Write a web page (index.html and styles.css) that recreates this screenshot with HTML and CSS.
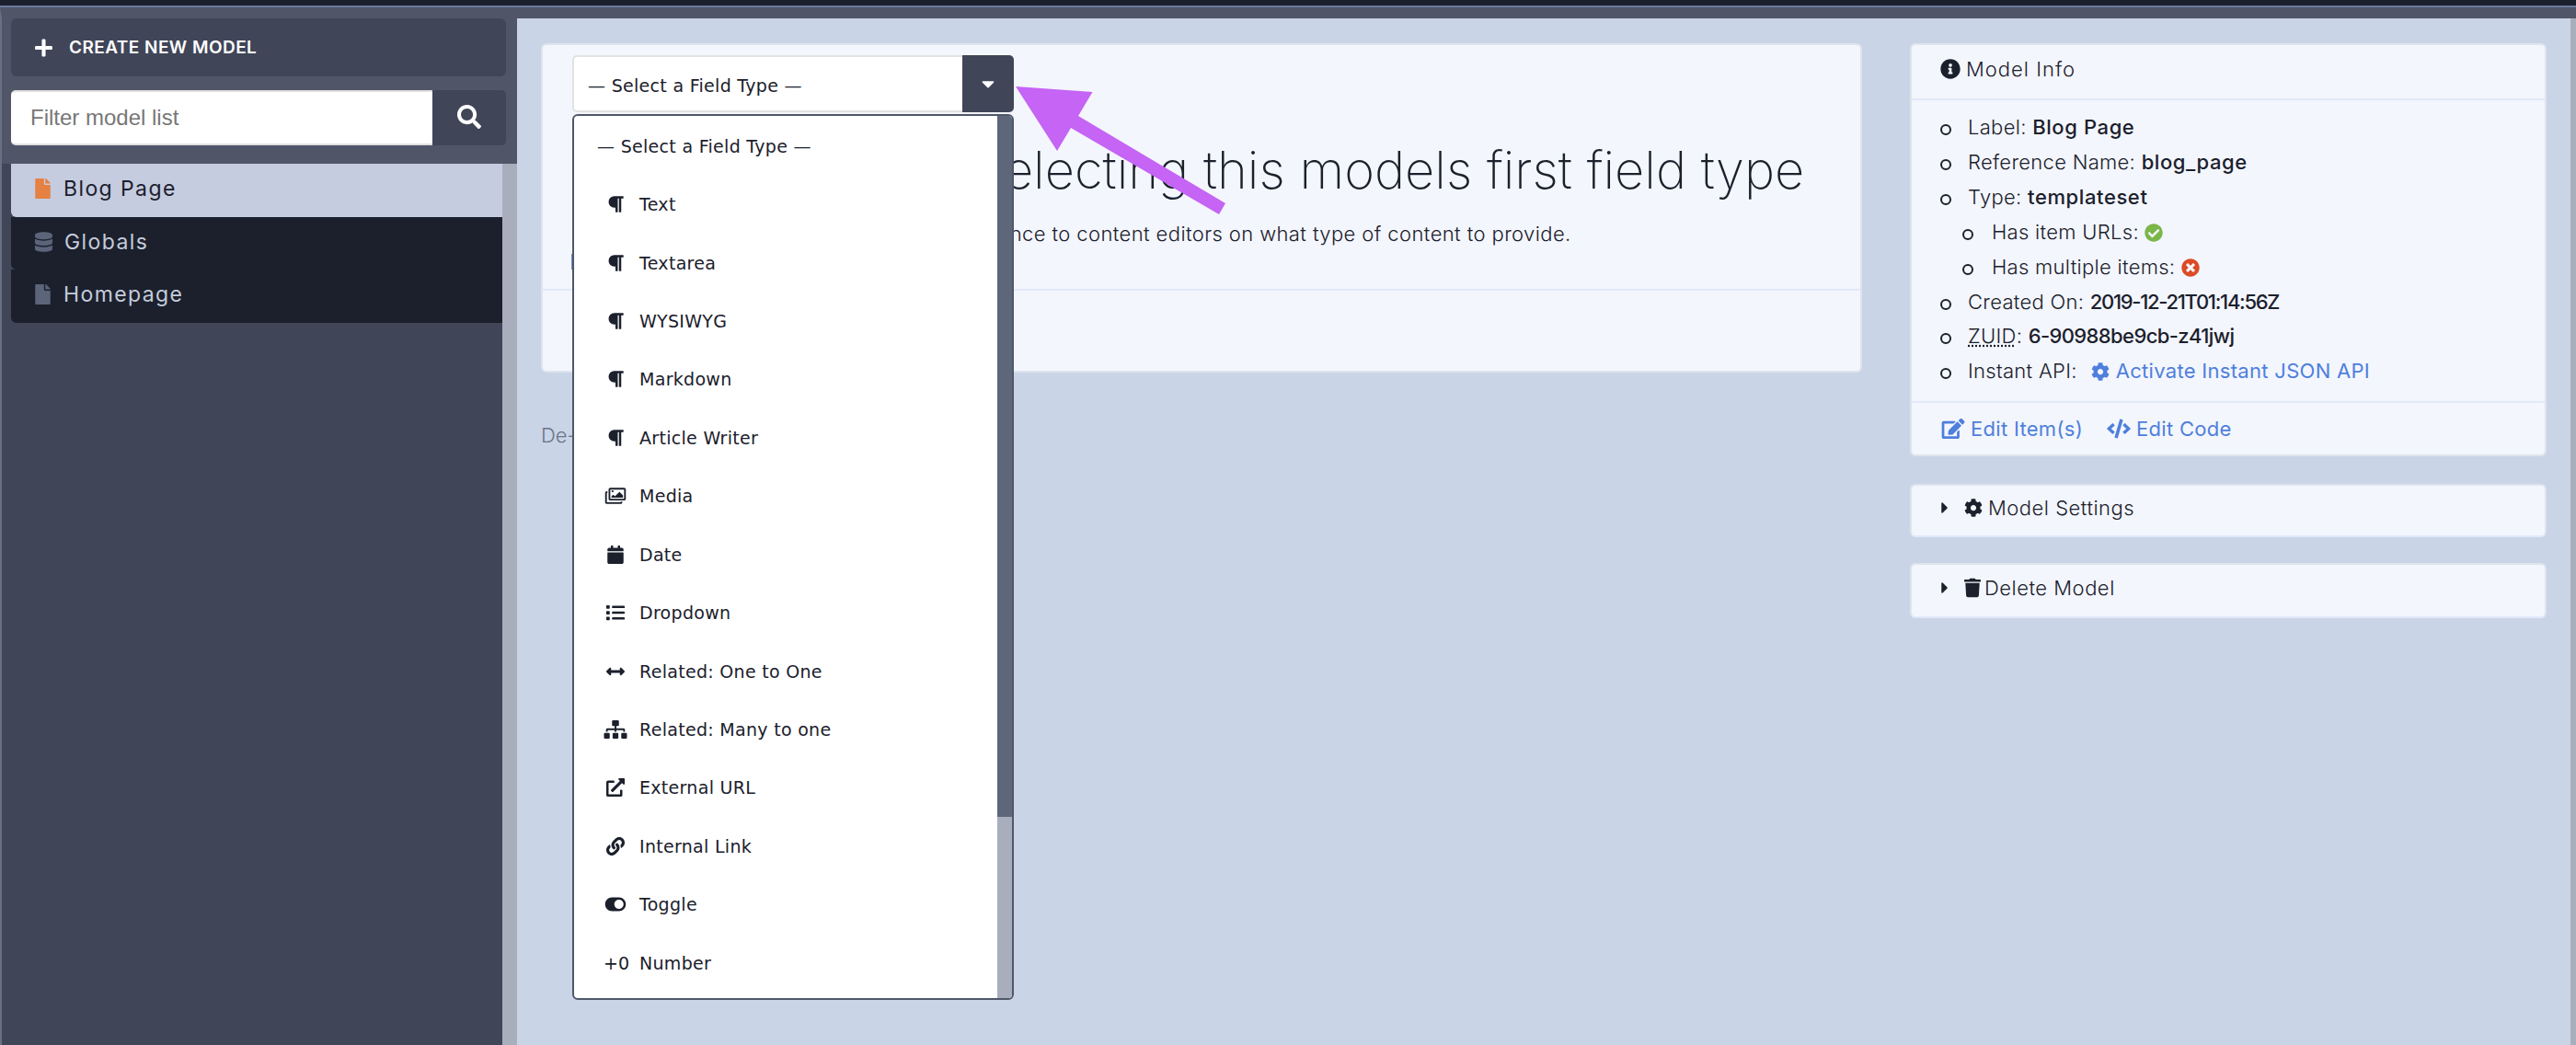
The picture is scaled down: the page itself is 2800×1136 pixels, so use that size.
FILE: index.html
```html
<!DOCTYPE html>
<html lang="en">
<head>
  <meta charset="UTF-8">
  <meta name="viewport" content="width=device-width, initial-scale=1.0">
  <title>Model Fields</title>
  <link rel="stylesheet" href="styles.css">
</head>
<body>

<svg class="sprite" xmlns="http://www.w3.org/2000/svg">
  <symbol id="i-plus" viewBox="0 0 448 512"><path d="M416 208H272V64c0-17.67-14.33-32-32-32h-32c-17.67 0-32 14.33-32 32v144H32c-17.67 0-32 14.33-32 32v32c0 17.67 14.33 32 32 32h144v144c0 17.67 14.33 32 32 32h32c17.67 0 32-14.33 32-32V304h144c17.67 0 32-14.33 32-32v-32c0-17.67-14.33-32-32-32z"/></symbol>
  <symbol id="i-search" viewBox="0 0 512 512"><path d="M505 442.7L405.3 343c-4.5-4.5-10.6-7-17-7H372c27.6-35.3 44-79.7 44-128C416 93.1 322.9 0 208 0S0 93.1 0 208s93.1 208 208 208c48.3 0 92.7-16.4 128-44v16.3c0 6.4 2.5 12.5 7 17l99.7 99.7c9.4 9.4 24.6 9.4 33.9 0l28.3-28.3c9.4-9.4 9.4-24.6.1-34zM208 336c-70.7 0-128-57.2-128-128 0-70.7 57.2-128 128-128 70.7 0 128 57.2 128 128 0 70.7-57.2 128-128 128z"/></symbol>
  <symbol id="i-file" viewBox="0 0 384 512"><path d="M224 136V0H24C10.7 0 0 10.7 0 24v464c0 13.3 10.7 24 24 24h336c13.3 0 24-10.7 24-24V160H248c-13.2 0-24-10.8-24-24zm160-14.1v6.1H256V0h6.1c6.4 0 12.5 2.5 17 7l97.9 98c4.5 4.5 7 10.6 7 16.9z"/></symbol>
  <symbol id="i-database" viewBox="0 0 448 512"><path d="M448 73.143v45.714C448 159.143 347.667 192 224 192S0 159.143 0 118.857V73.143C0 32.857 100.333 0 224 0s224 32.857 224 73.143zM448 176v102.857C448 319.143 347.667 352 224 352S0 319.143 0 278.857V176c48.125 33.143 136.208 48.572 224 48.572S399.874 209.143 448 176zm0 160v102.857C448 479.143 347.667 512 224 512S0 479.143 0 438.857V336c48.125 33.143 136.208 48.572 224 48.572S399.874 369.143 448 336z"/></symbol>
  <symbol id="i-caret-down" viewBox="0 0 320 512"><path d="M31.3 192h257.3c17.8 0 26.7 21.5 14.1 34.1L174.1 354.8c-7.8 7.8-20.5 7.8-28.3 0L17.2 226.1C4.6 213.5 13.5 192 31.3 192z"/></symbol>
  <symbol id="i-caret-right" viewBox="0 0 192 512"><path d="M0 384.662V127.338c0-17.818 21.543-26.741 34.142-14.142l128.662 128.662c7.81 7.81 7.81 20.474 0 28.284L34.142 398.804C21.543 411.404 0 402.48 0 384.662z"/></symbol>
  <symbol id="i-paragraph" viewBox="0 0 448 512"><path d="M448 48v32a16 16 0 0 1-16 16h-48v368a16 16 0 0 1-16 16h-32a16 16 0 0 1-16-16V96h-32v368a16 16 0 0 1-16 16h-32a16 16 0 0 1-16-16V352h-32a160 160 0 0 1 0-320h240a16 16 0 0 1 16 16z"/></symbol>
  <symbol id="i-images" viewBox="0 0 576 512"><path d="M144 32h384c26.5 0 48 21.5 48 48v256c0 26.5-21.5 48-48 48H144c-26.5 0-48-21.5-48-48V80c0-26.5 21.5-48 48-48zm6 48a6 6 0 0 0-6 6v244a6 6 0 0 0 6 6h372a6 6 0 0 0 6-6V86a6 6 0 0 0-6-6H150zm58 20c15.5 0 28 12.5 28 28s-12.5 28-28 28-28-12.5-28-28 12.5-28 28-28zm-32 204v-32l40-40c4.7-4.7 12.3-4.7 17 0l39 39 119-119c4.7-4.7 12.3-4.7 17 0l88 88v64H176zM48 128h16v48H54a6 6 0 0 0-6 6v244a6 6 0 0 0 6 6h372a6 6 0 0 0 6-6v-10h48v16c0 26.5-21.5 48-48 48H48c-26.5 0-48-21.5-48-48V176c0-26.5 21.5-48 48-48z"/></symbol>
  <symbol id="i-calendar" viewBox="0 0 448 512"><path d="M12 192h424c6.6 0 12 5.4 12 12v260c0 26.5-21.5 48-48 48H48c-26.5 0-48-21.5-48-48V204c0-6.6 5.4-12 12-12zm436-44v-36c0-26.5-21.5-48-48-48h-48V12c0-6.6-5.4-12-12-12h-40c-6.6 0-12 5.4-12 12v52H160V12c0-6.6-5.4-12-12-12h-40c-6.6 0-12 5.4-12 12v52H48C21.5 64 0 85.5 0 112v36c0 6.6 5.4 12 12 12h424c6.6 0 12-5.4 12-12z"/></symbol>
  <symbol id="i-list" viewBox="0 0 512 512"><path d="M80 368H16a16 16 0 0 0-16 16v64a16 16 0 0 0 16 16h64a16 16 0 0 0 16-16v-64a16 16 0 0 0-16-16zm0-320H16A16 16 0 0 0 0 64v64a16 16 0 0 0 16 16h64a16 16 0 0 0 16-16V64a16 16 0 0 0-16-16zm0 160H16a16 16 0 0 0-16 16v64a16 16 0 0 0 16 16h64a16 16 0 0 0 16-16v-64a16 16 0 0 0-16-16zm416 176H176a16 16 0 0 0-16 16v32a16 16 0 0 0 16 16h320a16 16 0 0 0 16-16v-32a16 16 0 0 0-16-16zm0-320H176a16 16 0 0 0-16 16v32a16 16 0 0 0 16 16h320a16 16 0 0 0 16-16V80a16 16 0 0 0-16-16zm0 160H176a16 16 0 0 0-16 16v32a16 16 0 0 0 16 16h320a16 16 0 0 0 16-16v-32a16 16 0 0 0-16-16z"/></symbol>
  <symbol id="i-arrows-h" viewBox="0 0 512 512"><path d="M377.941 169.941V216H134.059v-46.059c0-21.382-25.851-32.09-40.971-16.971L7.029 239.029c-9.373 9.373-9.373 24.568 0 33.941l86.059 86.059c15.119 15.119 40.971 4.411 40.971-16.971V296h243.882v46.059c0 21.382 25.851 32.09 40.971 16.971l86.059-86.059c9.373-9.373 9.373-24.568 0-33.941l-86.059-86.059c-15.12-15.12-40.971-4.412-40.971 16.97z"/></symbol>
  <symbol id="i-sitemap" viewBox="0 0 640 512"><path d="M128 352H32c-17.67 0-32 14.33-32 32v96c0 17.67 14.33 32 32 32h96c17.67 0 32-14.33 32-32v-96c0-17.67-14.33-32-32-32zm-24-80h192v48h48v-48h192v48h48v-57.59c0-21.17-17.23-38.41-38.41-38.41H344v-64h40c17.67 0 32-14.33 32-32V32c0-17.67-14.33-32-32-32H256c-17.67 0-32 14.33-32 32v96c0 17.67 14.33 32 32 32h40v64H94.41C73.23 224 56 241.23 56 262.41V320h48v-48zm264 80h-96c-17.67 0-32 14.33-32 32v96c0 17.67 14.33 32 32 32h96c17.67 0 32-14.33 32-32v-96c0-17.67-14.33-32-32-32zm240 0h-96c-17.67 0-32 14.33-32 32v96c0 17.67 14.33 32 32 32h96c17.67 0 32-14.33 32-32v-96c0-17.67-14.33-32-32-32z"/></symbol>
  <symbol id="i-external" viewBox="0 0 512 512"><path d="M432 320h-32a16 16 0 0 0-16 16v112H64V128h144a16 16 0 0 0 16-16V80a16 16 0 0 0-16-16H48a48 48 0 0 0-48 48v352a48 48 0 0 0 48 48h352a48 48 0 0 0 48-48V336a16 16 0 0 0-16-16zM488 0H360c-21.37 0-32.05 25.91-17 41l35.73 35.73L135 320.37a24 24 0 0 0 0 34L157.67 377a24 24 0 0 0 34 0l243.61-243.68L471 169c15 15 41 4.5 41-17V24a24 24 0 0 0-24-24z"/></symbol>
  <symbol id="i-link" viewBox="0 0 512 512"><path d="M326.612 185.391c59.747 59.809 58.927 155.698.36 214.59-.11.12-.24.25-.36.37l-67.2 67.2c-59.27 59.27-155.699 59.262-214.96 0-59.27-59.26-59.27-155.7 0-214.96l37.106-37.106c9.84-9.84 26.786-3.3 27.294 10.606.648 17.722 3.826 35.527 9.69 52.721 1.986 5.822.567 12.262-3.783 16.612l-13.087 13.087c-28.026 28.026-28.905 73.66-1.155 101.96 28.024 28.579 74.086 28.749 102.325.51l67.2-67.19c28.191-28.191 28.073-73.757 0-101.83-3.701-3.694-7.429-6.564-10.341-8.569a16.037 16.037 0 0 1-6.947-12.606c-.396-10.567 3.348-21.456 11.698-29.806l21.054-21.055c5.521-5.521 14.182-6.199 20.584-1.731a152.482 152.482 0 0 1 20.522 17.197zM467.547 44.449c-59.261-59.262-155.69-59.27-214.96 0l-67.2 67.2c-.12.12-.25.25-.36.37-58.566 58.892-59.387 154.781.36 214.59a152.454 152.454 0 0 0 20.521 17.196c6.402 4.468 15.064 3.789 20.584-1.731l21.054-21.055c8.35-8.35 12.094-19.239 11.698-29.806a16.037 16.037 0 0 0-6.947-12.606c-2.912-2.005-6.64-4.875-10.341-8.569-28.073-28.073-28.191-73.639 0-101.83l67.2-67.19c28.239-28.239 74.3-28.069 102.325.51 27.75 28.3 26.872 73.934-1.155 101.96l-13.087 13.087c-4.35 4.35-5.769 10.79-3.783 16.612 5.864 17.194 9.042 34.999 9.69 52.721.509 13.906 17.454 20.446 27.294 10.606l37.106-37.106c59.271-59.259 59.271-155.699.001-214.959z"/></symbol>
  <symbol id="i-toggle" viewBox="0 0 576 512"><path d="M384 64H192C86 64 0 150 0 256s86 192 192 192h192c106 0 192-86 192-192S490 64 384 64zm0 320c-70.8 0-128-57.3-128-128 0-70.8 57.3-128 128-128 70.8 0 128 57.3 128 128 0 70.8-57.3 128-128 128z"/></symbol>
  <symbol id="i-info" viewBox="0 0 512 512"><path d="M256 8C119.043 8 8 119.083 8 256c0 136.997 111.043 248 248 248s248-111.003 248-248C504 119.083 392.957 8 256 8zm0 110c23.196 0 42 18.804 42 42s-18.804 42-42 42-42-18.804-42-42 18.804-42 42-42zm56 254c0 6.627-5.373 12-12 12h-88c-6.627 0-12-5.373-12-12v-24c0-6.627 5.373-12 12-12h12v-64h-12c-6.627 0-12-5.373-12-12v-24c0-6.627 5.373-12 12-12h64c6.627 0 12 5.373 12 12v100h12c6.627 0 12 5.373 12 12v24z"/></symbol>
  <symbol id="i-check" viewBox="0 0 512 512"><path d="M504 256c0 136.967-111.033 248-248 248S8 392.967 8 256 119.033 8 256 8s248 111.033 248 248zM227.314 387.314l184-184c6.248-6.248 6.248-16.379 0-22.627l-22.627-22.627c-6.248-6.249-16.379-6.249-22.628 0L216 308.118l-70.059-70.059c-6.248-6.248-16.379-6.248-22.628 0l-22.627 22.627c-6.248 6.248-6.248 16.379 0 22.627l104 104c6.249 6.249 16.379 6.249 22.628.001z"/></symbol>
  <symbol id="i-times" viewBox="0 0 512 512"><path d="M256 8C119 8 8 119 8 256s111 248 248 248 248-111 248-248S393 8 256 8zm121.6 313.1c4.7 4.7 4.7 12.3 0 17L338 377.6c-4.7 4.7-12.3 4.7-17 0L256 312l-65.1 65.6c-4.7 4.7-12.3 4.7-17 0L134.4 338c-4.7-4.7-4.7-12.3 0-17l65.6-65-65.6-65.1c-4.7-4.7-4.7-12.3 0-17l39.6-39.6c4.7-4.7 12.3-4.7 17 0l65 65.7 65.1-65.6c4.7-4.7 12.3-4.7 17 0l39.6 39.6c4.7 4.7 4.7 12.3 0 17L312 256l65.6 65.1z"/></symbol>
  <symbol id="i-cog" viewBox="0 0 512 512"><path d="M487.4 315.7l-42.6-24.6c4.3-23.2 4.3-47 0-70.2l42.6-24.6c4.9-2.8 7.1-8.6 5.5-14-11.1-35.6-30-67.8-54.7-94.6-3.8-4.1-10-5.1-14.8-2.3L380.8 110c-17.9-15.4-38.5-27.3-60.8-35.1V25.8c0-5.6-3.9-10.5-9.4-11.7-36.7-8.2-74.3-7.8-109.2 0-5.5 1.2-9.4 6.1-9.4 11.7V75c-22.2 7.9-42.8 19.8-60.8 35.1L88.7 85.5c-4.9-2.8-11-1.9-14.8 2.3-24.7 26.7-43.6 58.9-54.7 94.6-1.7 5.4.6 11.2 5.5 14L67.3 221c-4.3 23.2-4.3 47 0 70.2l-42.6 24.6c-4.9 2.8-7.1 8.6-5.5 14 11.1 35.6 30 67.8 54.7 94.6 3.8 4.1 10 5.1 14.8 2.3l42.6-24.6c17.9 15.4 38.5 27.3 60.8 35.1v49.2c0 5.6 3.9 10.5 9.4 11.7 36.7 8.2 74.3 7.8 109.2 0 5.5-1.2 9.4-6.1 9.4-11.7v-49.2c22.2-7.9 42.8-19.8 60.8-35.1l42.6 24.6c4.9 2.8 11 1.9 14.8-2.3 24.7-26.7 43.6-58.9 54.7-94.6 1.5-5.5-.7-11.3-5.6-14.1zM256 336c-44.1 0-80-35.9-80-80s35.9-80 80-80 80 35.9 80 80-35.9 80-80 80z"/></symbol>
  <symbol id="i-edit" viewBox="0 0 576 512"><path d="M402.6 83.2l90.2 90.2c3.8 3.8 3.8 10 0 13.8L274.4 405.6l-92.8 10.3c-12.4 1.4-22.9-9.1-21.5-21.5l10.3-92.8L388.8 83.2c3.8-3.8 10-3.8 13.8 0zm162-22.9l-48.8-48.8c-15.2-15.2-39.9-15.2-55.2 0l-35.4 35.4c-3.8 3.8-3.8 10 0 13.8l90.2 90.2c3.8 3.8 10 3.8 13.8 0l35.4-35.4c15.2-15.3 15.2-40 0-55.2zM384 346.2V448H64V128h229.8c3.2 0 6.2-1.3 8.5-3.5l40-40c7.6-7.6 2.2-20.5-8.5-20.5H48C21.5 64 0 85.5 0 112v352c0 26.5 21.5 48 48 48h352c26.5 0 48-21.5 48-48V306.2c0-10.7-12.9-16-20.5-8.5l-40 40c-2.2 2.3-3.5 5.3-3.5 8.5z"/></symbol>
  <symbol id="i-code" viewBox="0 0 640 512"><path d="M278.9 511.5l-61-17.7c-6.4-1.8-10-8.5-8.2-14.9L346.2 8.7c1.8-6.4 8.5-10 14.9-8.2l61 17.7c6.4 1.8 10 8.5 8.2 14.9L293.8 503.3c-1.9 6.4-8.5 10.1-14.9 8.2zm-114-112.2l43.5-46.4c4.6-4.9 4.3-12.7-.8-17.2L117 256l90.6-79.7c5.1-4.5 5.5-12.3.8-17.2l-43.5-46.4c-4.5-4.8-12.1-5.1-17-.5L3.8 247.2c-5.1 4.7-5.1 12.8 0 17.5l144.1 135.1c4.9 4.6 12.5 4.4 17-.5zm327.2.6l144.1-135.1c5.1-4.7 5.1-12.8 0-17.5L492.1 112.1c-4.8-4.5-12.4-4.3-17 .5L431.6 159c-4.6 4.9-4.3 12.7.8 17.2L523 256l-90.6 79.7c-5.1 4.5-5.5 12.3-.8 17.2l43.5 46.4c4.5 4.9 12.1 5.1 17 .6z"/></symbol>
  <symbol id="i-trash" viewBox="0 0 448 512"><path d="M432 32H312l-9.4-18.7A24 24 0 0 0 281.1 0H166.8a23.72 23.72 0 0 0-21.4 13.3L136 32H16A16 16 0 0 0 0 48v32a16 16 0 0 0 16 16h416a16 16 0 0 0 16-16V48a16 16 0 0 0-16-16zM53.2 467a48 48 0 0 0 47.9 45h245.8a48 48 0 0 0 47.9-45L416 128H32z"/></symbol>
</svg>

<div class="topbar"></div>

<div class="app">
  <aside class="sidebar">
    <div class="sidebar-head">
      <button class="create-btn"><svg class="icon"><use href="#i-plus"/></svg>CREATE NEW MODEL</button>
      <div class="filter">
        <input class="filter-input" type="text" placeholder="Filter model list">
        <button class="filter-btn"><svg class="icon"><use href="#i-search"/></svg></button>
      </div>
    </div>
    <div class="model-wrap">
      <ul class="models">
        <li class="model active"><svg class="icon"><use href="#i-file"/></svg>Blog Page</li>
        <li class="model"><svg class="icon db"><use href="#i-database"/></svg>Globals</li>
        <li class="model"><svg class="icon"><use href="#i-file"/></svg>Homepage</li>
      </ul>
      <div class="model-track"></div>
    </div>
  </aside>

  <main class="main">
    <section class="editor">
      <div class="card field-card">
        <div class="field-top">
          <h1>Start by selecting this models first field type</h1>
          <p>Provide guidance to content editors on what type of content to provide.</p>
        </div>
        <div class="field-foot"></div>
        <div class="peek-btn"></div>

        <div class="select">
          <div class="select-value">— Select a Field Type —</div>
          <div class="select-caret"><svg class="icon"><use href="#i-caret-down"/></svg></div>
        </div>
        <div class="select-menu">
          <ul class="options">
            <li class="option plain">— Select a Field Type —</li>
            <li class="option"><svg class="icon"><use href="#i-paragraph"/></svg><span>Text</span></li>
            <li class="option"><svg class="icon"><use href="#i-paragraph"/></svg><span>Textarea</span></li>
            <li class="option"><svg class="icon"><use href="#i-paragraph"/></svg><span>WYSIWYG</span></li>
            <li class="option"><svg class="icon"><use href="#i-paragraph"/></svg><span>Markdown</span></li>
            <li class="option"><svg class="icon"><use href="#i-paragraph"/></svg><span>Article Writer</span></li>
            <li class="option"><svg class="icon"><use href="#i-images"/></svg><span>Media</span></li>
            <li class="option"><svg class="icon"><use href="#i-calendar"/></svg><span>Date</span></li>
            <li class="option"><svg class="icon"><use href="#i-list"/></svg><span>Dropdown</span></li>
            <li class="option"><svg class="icon"><use href="#i-arrows-h"/></svg><span>Related: One to One</span></li>
            <li class="option"><svg class="icon"><use href="#i-sitemap"/></svg><span>Related: Many to one</span></li>
            <li class="option"><svg class="icon"><use href="#i-external"/></svg><span>External URL</span></li>
            <li class="option"><svg class="icon"><use href="#i-link"/></svg><span>Internal Link</span></li>
            <li class="option"><svg class="icon"><use href="#i-toggle"/></svg><span>Toggle</span></li>
            <li class="option"><b class="num-icon">+0</b><span>Number</span></li>
          </ul>
          <div class="menu-scroll"><div class="menu-thumb"></div></div>
        </div>

        <svg class="callout" viewBox="0 0 240 150" xmlns="http://www.w3.org/2000/svg">
          <polygon points="4,4 87.5,10 72,36 232,131 225,143 64,49 49,74"/>
        </svg>
      </div>
      <p class="deactivated">De-activated fields</p>
    </section>

    <aside class="info">
      <div class="card">
        <div class="info-head"><svg class="icon"><use href="#i-info"/></svg>Model Info</div>
        <ul class="facts">
          <li>Label: <strong>Blog Page</strong></li>
          <li>Reference Name: <strong>blog_page</strong></li>
          <li>Type: <strong>templateset</strong>
            <ul>
              <li>Has item URLs: <svg class="icon good"><use href="#i-check"/></svg></li>
              <li>Has multiple items: <svg class="icon bad"><use href="#i-times"/></svg></li>
            </ul>
          </li>
          <li>Created On: <strong class="date">2019-12-21T01:14:56Z</strong></li>
          <li><abbr>ZUID</abbr>: <strong class="zuid">6-90988be9cb-z41jwj</strong></li>
          <li>Instant API: <a class="api-link" href="#"><svg class="icon"><use href="#i-cog"/></svg> Activate Instant JSON API</a></li>
        </ul>
        <div class="info-foot">
          <a href="#"><svg class="icon"><use href="#i-edit"/></svg>Edit Item(s)</a>
          <a href="#"><svg class="icon"><use href="#i-code"/></svg>Edit Code</a>
        </div>
      </div>
      <div class="card fold">
        <svg class="icon caret"><use href="#i-caret-right"/></svg><svg class="icon"><use href="#i-cog"/></svg>Model Settings
      </div>
      <div class="card fold">
        <svg class="icon caret"><use href="#i-caret-right"/></svg><svg class="icon trash"><use href="#i-trash"/></svg>Delete Model
      </div>
    </aside>
    <div class="page-track"></div>
  </main>
</div>

</body>
</html>
```

FILE: styles.css
```css
* {
  box-sizing: border-box;
}

html,
body {
  height: 100%;
}

body {
  margin: 0;
  display: flex;
  flex-direction: column;
  overflow: hidden;
  background-color: #c9d4e7;
  color: #1b202c;
  font-family: Inter, "Open Sans", sans-serif;
}

.sprite {
  display: none;
}

.icon {
  display: inline-block;
  fill: currentColor;
  flex: none;
}

ul {
  list-style: none;
  margin: 0;
  padding: 0;
}

a {
  color: #4f7fdc;
  text-decoration: none;
}

.topbar {
  height: 8px;
  flex: none;
  background-color: #1b202c;
  border-bottom: 2px solid #697a9b;
}

.app {
  flex: 1;
  display: flex;
  min-height: 0;
  border-top: 12px solid #505668;
  border-left: 2px solid #6a7083;
}

/* sidebar */
.sidebar {
  width: 560px;
  flex: none;
  display: flex;
  flex-direction: column;
  background-color: #404558;
}

.sidebar-head {
  height: 158px;
  flex: none;
  padding: 0 12px 0 10px;
  background-color: #505668;
}

.create-btn {
  width: 100%;
  height: 63px;
  padding: 0 26px;
  display: flex;
  align-items: center;
  gap: 18px;
  border: none;
  border-radius: 6px;
  background-color: #404558;
  color: #fff;
  font-family: Inter, sans-serif;
  font-size: 19px;
  font-weight: 600;
  letter-spacing: 0.45px;
}

.create-btn .icon {
  width: 19px;
  height: 22px;
}

.filter {
  display: flex;
  height: 60px;
  margin-top: 15px;
}

.filter-input {
  width: 458px;
  height: 100%;
  padding: 0 21px;
  border: none;
  border-top: 2px solid #e0e0e0;
  border-bottom: 2px solid #e0e0e0;
  border-radius: 5px 0 0 5px;
  background-color: #fff;
  font-family: "Liberation Sans", Arial, sans-serif;
  font-size: 24px;
}

.filter-input::placeholder {
  color: #777;
}

.filter-btn {
  width: 80px;
  border: none;
  border-radius: 0 5px 5px 0;
  background-color: #404558;
  color: #fff;
  padding: 0;
}

.filter-btn .icon {
  width: 26px;
  height: 26px;
}

.model-wrap {
  flex: 1;
  display: flex;
  padding-left: 10px;
}

.models {
  width: 534px;
}

.model {
  height: 57.5px;
  display: flex;
  align-items: center;
  padding: 0 0 3px 26px;
  gap: 14px;
  background-color: #1b202c;
  border-radius: 0 0 0 6px;
  color: #c5cbdd;
  font-family: Inter, sans-serif;
  font-size: 23px;
  font-weight: 400;
  letter-spacing: 1.4px;
}

.model .icon {
  width: 17px;
  height: 22px;
  color: #5b6479;
}

.model .db {
  width: 19px;
  margin-right: -1px;
}

.model.active {
  background-color: #c6cce0;
  color: #1b202c;
}

.model.active .icon {
  color: #e58142;
}

.model-track {
  width: 16px;
  background-color: #a9aebd;
}

/* main area */
.main {
  flex: 1;
  position: relative;
  display: flex;
  align-items: flex-start;
  padding: 27px 32px 0 26px;
  background-color: #c9d4e7;
  min-width: 0;
}

.page-track {
  position: absolute;
  top: 0;
  right: 0;
  bottom: 0;
  width: 6px;
  background-color: #a9aebd;
}

.card {
  background-color: #f3f6fc;
  border: 2px solid #dfe4ec;
  border-radius: 6px;
}

.editor {
  width: 1436px;
  flex: none;
}

.field-card {
  position: relative;
  height: 358px;
}

.field-top {
  height: 267px;
  padding-top: 102px;
  text-align: center;
  border-bottom: 2px solid #e2e9fb;
}

.field-top h1 {
  margin: 0;
  padding-left: 202px;
  font-size: 56px;
  font-weight: 200;
  line-height: 68px;
}

.field-top p {
  margin: 22px 0 0;
  padding-left: 48px;
  font-size: 22px;
  font-weight: 300;
  letter-spacing: 0.4px;
}

/* left edge of a button that the open menu covers */
.peek-btn {
  position: absolute;
  left: 31px;
  top: 227px;
  width: 3px;
  height: 17px;
  background-color: #6f8cc5;
}

/* the open dropdown lies over the card */
.select {
  position: absolute;
  left: 32px;
  top: 11px;
  width: 480px;
  height: 62px;
  display: flex;
  font-family: "DejaVu Sans", sans-serif;
}

.select-value {
  flex: 1;
  display: flex;
  align-items: center;
  padding: 3px 0 0 15px;
  background-color: #fff;
  border: 2px solid #e2e2e2;
  border-right: none;
  border-radius: 5px 0 0 5px;
  font-size: 19px;
  letter-spacing: 0.3px;
}

.select-caret {
  width: 56px;
  display: flex;
  align-items: center;
  justify-content: center;
  background-color: #404558;
  color: #fff;
  border-radius: 0 5px 5px 0;
}

.select-caret .icon {
  width: 14px;
  height: 22px;
}

.select-menu {
  position: absolute;
  left: 32px;
  top: 75px;
  width: 480px;
  height: 963px;
  display: flex;
  background-color: #fff;
  border: 2px solid #4f5769;
  border-radius: 6px;
  overflow: hidden;
  font-family: "DejaVu Sans", sans-serif;
}

.options {
  flex: 1;
  padding-top: 1px;
}

.option {
  height: 63.43px;
  display: flex;
  align-items: center;
  font-size: 19px;
  letter-spacing: 0.3px;
}

.option.plain {
  padding-left: 25px;
}

.option .icon {
  width: 26px;
  height: 20px;
  margin: 0 13px 0 32px;
}

.option span {
  white-space: nowrap;
}

.num-icon {
  width: 26px;
  margin: 0 13px 0 32px;
  font-weight: 400;
  letter-spacing: 0;
  font-size: 19px;
  white-space: nowrap;
}

.menu-scroll {
  width: 16px;
  background-color: #a9aebd;
}

.menu-thumb {
  height: 762px;
  background-color: #5e667a;
}

.callout {
  position: absolute;
  left: 510px;
  top: 41px;
  width: 240px;
  height: 150px;
  fill: #c564f5;
}

.deactivated {
  margin: 55px 0 0;
  font-size: 22px;
  font-weight: 300;
  color: #6b7488;
}

/* model info */
.info {
  width: 692px;
  flex: none;
  margin-left: 52px;
  display: flex;
  flex-direction: column;
  font-size: 22px;
  font-weight: 300;
  letter-spacing: 0.3px;
}

.info-head {
  height: 60px;
  display: flex;
  align-items: center;
  gap: 6px;
  padding: 0 0 7px 31px;
  border-bottom: 2px solid #e2e9fb;
  letter-spacing: 1px;
}

.info-head .icon {
  width: 22px;
  height: 22px;
}

.facts {
  padding: 11px 0 0 31px;
  height: 329px;
  border-bottom: 2px solid #e2e9fb;
}

.facts li {
  position: relative;
  padding-left: 30px;
  line-height: 37.9px;
}

.facts li::before {
  content: "";
  position: absolute;
  left: 0;
  top: 15px;
  width: 8px;
  height: 8px;
  border: 2px solid #1b202c;
  border-radius: 50%;
}

.facts ul {
  margin-left: -6px;
}

.facts ul li {
  padding-left: 32px;
}

.facts strong {
  font-weight: 500;
  letter-spacing: 0.6px;
}

.facts .date {
  letter-spacing: -1.3px;
}

.facts .zuid {
  letter-spacing: -0.6px;
}

.facts .icon {
  width: 20px;
  height: 20px;
  vertical-align: -3px;
}

.good {
  color: #7ab648;
}

.bad {
  color: #dc4b25;
}

abbr {
  text-decoration: underline dotted;
}

.api-link {
  margin-left: 9px;
  font-weight: 400;
}

.info-foot {
  height: 56px;
  display: flex;
  align-items: center;
  gap: 26px;
  padding-left: 32px;
  font-weight: 400;
}

.info-foot a {
  display: flex;
  align-items: center;
  gap: 6px;
}

.info-foot .icon {
  width: 26px;
  height: 22px;
}

.fold {
  display: flex;
  align-items: center;
  margin-top: 30px;
  height: 58px;
  padding: 0 0 6px 32px;
  border-bottom-color: #e2e9fb;
  letter-spacing: 0.5px;
}

.fold + .fold {
  margin-top: 28px;
  height: 60px;
}

.fold .icon {
  width: 20px;
  height: 22px;
  margin-right: 6px;
}

.fold .trash {
  width: 18px;
  margin-right: 4px;
}

.fold .caret {
  width: 8px;
  height: 20px;
  margin-right: 17px;
}
```
